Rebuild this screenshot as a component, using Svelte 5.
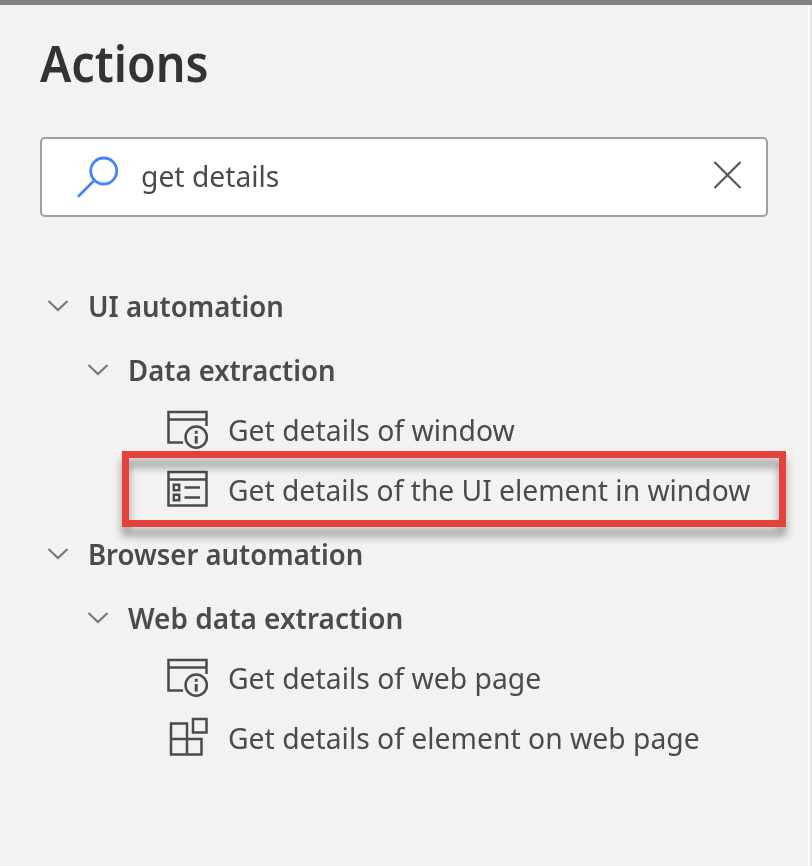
<script>
  const groups = [
    {
      label: 'UI automation', width: 196,
      child: {
        label: 'Data extraction', width: 208,
        actions: [
          { label: 'Get details of window', width: 287, icon: 'info' },
          { label: 'Get details of the UI element in window', width: 522, icon: 'list', marked: true }
        ]
      }
    },
    {
      label: 'Browser automation', width: 275,
      child: {
        label: 'Web data extraction', width: 275,
        actions: [
          { label: 'Get details of web page', width: 313, icon: 'info' },
          { label: 'Get details of element on web page', width: 472, icon: 'blocks' }
        ]
      }
    }
  ];

  // Condenses a label horizontally to the width given for it.
  function fit(node, width) {
    node.style.transform = `scaleX(${width / node.offsetWidth})`;
  }
</script>

{#snippet chevron()}
  <svg class="chevron" width="22" height="14" viewBox="0 0 22 14"><path d="M1.5 2 11 11 20.5 2" /></svg>
{/snippet}

{#snippet glyph(name)}
  <svg class="glyph" width="44" height="42" viewBox="0 0 44 42">
    {#if name === 'info'}
      <path d="M41.5 17V3H3.5V33.5H18M3.5 10.5H41.5" />
      <circle cx="31.2" cy="28.2" r="10.6" />
      <path class="info" d="M31.2 27V34.5M31.2 21.8V24.8" />
    {:else if name === 'list'}
      <path d="M3.5 3H41.5V36.5H3.5ZM3.5 10.5H41.5M19.5 18.5H35M19.5 28.5H35" />
      <path d="M8.8 15.8H14.2V21.2H8.8ZM8.8 25.8H14.2V31.2H8.8Z" />
    {:else}
      <path d="M6 6.5H22V37.5H6ZM6 22H36.5V37.5H22M28 2H41.5V15.5H28Z" />
    {/if}
  </svg>
{/snippet}

<main>
  <div class="panel">
    <h1><span use:fit={169}>Actions</span></h1>
    <div class="search">
      <svg class="lens" width="44" height="44" viewBox="0 0 44 44">
        <circle cx="27.7" cy="16" r="13" /><path d="M18.4 25.3 2.7 41" />
      </svg>
      <div class="query"><span use:fit={138}>get details</span></div>
      <svg class="clear" width="30" height="30" viewBox="0 0 30 30"><path d="M1.5 2 27.5 28M27.5 2 1.5 28" /></svg>
    </div>
    <div class="tree">
      {#each groups as group}
        <div class="row header">{@render chevron()}<span use:fit={group.width}>{group.label}</span></div>
        <div class="row header nested">{@render chevron()}<span use:fit={group.child.width}>{group.child.label}</span></div>
        {#each group.child.actions as action}
          <div class="row action">
            {@render glyph(action.icon)}
            <span use:fit={action.width}>{action.label}</span>
            {#if action.marked}<div class="marker"></div>{/if}
          </div>
        {/each}
      {/each}
    </div>
  </div>
</main>

<style>
  :global(body) { margin: 0; }
  main {
    box-sizing: border-box;
    width: 812px;
    height: 866px;
    overflow: hidden;
    border-top: 5px solid #808080;
    background: #f3f2f0;
    color: #4c4b49;
    font: 29.5px/1 "Noto Sans", "Open Sans", sans-serif;
  }
  .panel {
    box-sizing: border-box;
    height: 100%;
    box-shadow: inset -2px 0 #e5e5e4, inset -4px 0 #fbfbfa;
    padding: 29px 40px 0 40px;
  }
  span { display: inline-block; white-space: nowrap; transform-origin: 0 50%; }
  h1 {
    margin: 0;
    height: 103px;
    line-height: 58px;
    font-size: 50px;
    font-weight: 600;
    color: #343331;
  }
  .search {
    box-sizing: border-box;
    display: flex;
    align-items: center;
    width: 728px;
    height: 80px;
    border: 2px solid #a09f9d;
    border-radius: 5px;
    padding: 0 23px 0 34px;
    background: #fff;
  }
  .query { flex: 1; margin: 0 0 2px 21px; }
  svg { flex: none; fill: none; stroke: #4c4b49; stroke-width: 2.5; }
  .info { stroke-width: 3; }
  .lens { stroke: #4783fa; stroke-width: 2.8; stroke-linecap: round; }
  .clear { stroke: #555; stroke-width: 2.2; margin-bottom: 4px; }
  .tree { padding-top: 55px; }
  .row { position: relative; display: flex; align-items: center; height: 60px; }
  .header { margin-top: 4px; padding-left: 7px; font-weight: 600; }
  .nested { padding-left: 47px; }
  .chevron { margin-right: 18.5px; stroke: #777674; stroke-width: 2; }
  .action { padding-left: 125px; }
  .glyph { margin-right: 18.5px; }
  .marker {
    position: absolute;
    left: 82px;
    top: -9px;
    box-sizing: border-box;
    width: 664px;
    height: 76px;
    border: 7px solid #e3433a;
    filter: drop-shadow(0 9px 4px rgba(0, 0, 0, 0.38));
  }
</style>
